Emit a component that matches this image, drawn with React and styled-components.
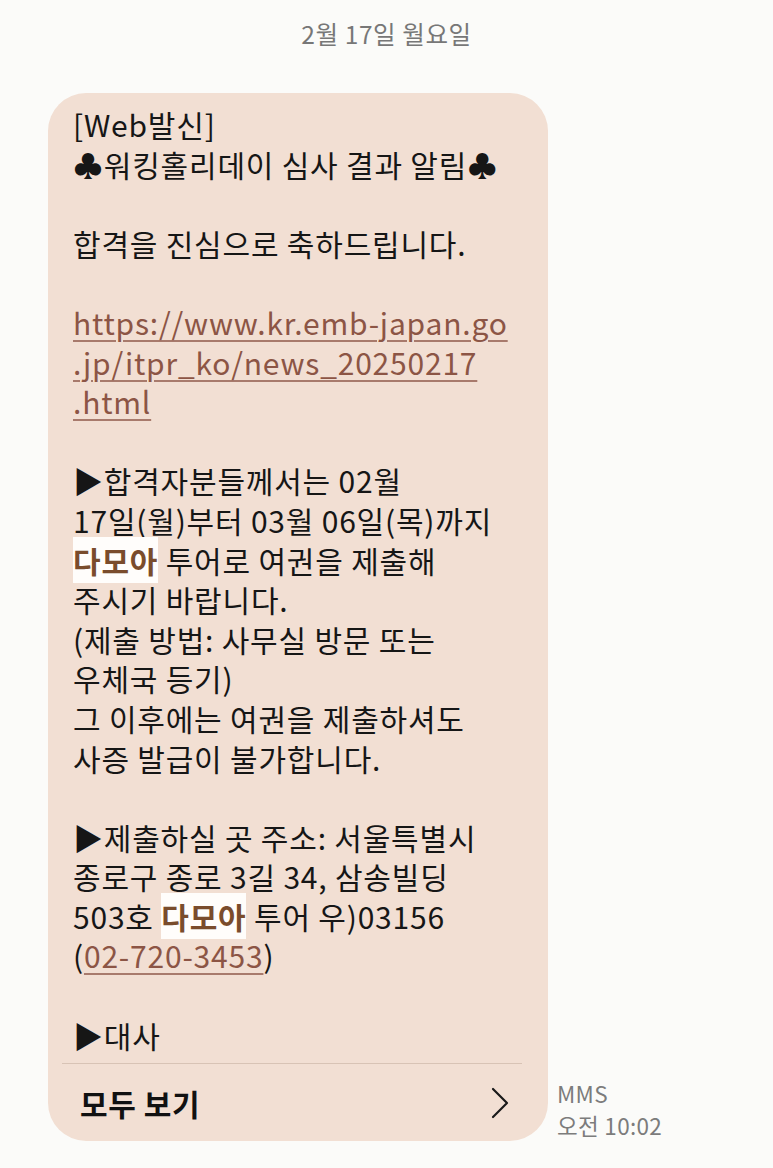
import React from "react";
import styled, { createGlobalStyle } from "styled-components";

const GlobalStyle = createGlobalStyle`
	html, body {
		margin: 0;
		padding: 0;
		background: #fbfbf9;
	}
	body {
		font-family: "Noto Sans CJK KR", "Noto Sans", sans-serif;
		-webkit-font-smoothing: antialiased;
	}
`;

const Page = styled.div`
	width: 773px;
	height: 1168px;
	overflow: hidden;
	background: #fbfbf9;
`;

const DateHeader = styled.div`
	text-align: center;
	color: #777;
	font-size: 24.5px;
	letter-spacing: 0.6px;
	line-height: 32px;
	padding: 18px 0 43px;
`;

const Row = styled.div`
	display: flex;
	align-items: flex-end;
	gap: 9px;
	padding-left: 48px;
`;

const Bubble = styled.div`
	width: 500px;
	background: #f2dfd3;
	border-radius: 38px;
	overflow: hidden;
`;

const Body = styled.div`
	padding: 12px 20px 8px 25px;
	color: #161616;
	font-size: 30px;
	letter-spacing: 0.8px;
	line-height: 39.6px;
	white-space: nowrap;
`;

const Line = styled.div`
	height: 39.6px;
`;

const Link = styled.span`
	color: #8c5545;
	text-decoration: underline;
	text-decoration-thickness: 1.5px;
	text-underline-offset: 5px;
	text-decoration-color: #a87a6c;
`;

const Mark = styled.span`
	background: #fffdfb;
	color: #7a4c2c;
	font-weight: 700;
	padding: 1px 0;
`;

const Divider = styled.div`
	height: 1px;
	background: #d8c3b5;
	margin: 0 26px 0 14px;
`;

const ViewAll = styled.div`
	display: flex;
	align-items: center;
	justify-content: space-between;
	padding: 0 38px 0 32px;
	height: 77px;
	font-size: 30px;
	letter-spacing: 0.6px;
	font-weight: 700;
	color: #111;
`;

const Meta = styled.div`
	color: #7c7c7c;
	font-size: 22.5px;
	letter-spacing: 0.3px;
	line-height: 32px;
	padding-bottom: 0;
`;

const Chevron = () => (
	<svg width="20" height="32" viewBox="0 0 20 32" fill="none">
		<path d="M3 2 L17 16 L3 30" stroke="#1a1a1a" strokeWidth="2.2" strokeLinecap="round" strokeLinejoin="round" />
	</svg>
);

export default function App() {
	return (
		<Page>
			<GlobalStyle />
			<DateHeader>2월 17일 월요일</DateHeader>
			<Row>
				<Bubble>
					<Body>
						<Line>[Web발신]</Line>
						<Line>♣워킹홀리데이 심사 결과 알림♣</Line>
						<Line />
						<Line>합격을 진심으로 축하드립니다.</Line>
						<Line />
						<Line><Link>https://www.kr.emb-japan.go</Link></Line>
						<Line><Link>.jp/itpr_ko/news_20250217</Link></Line>
						<Line><Link>.html</Link></Line>
						<Line />
						<Line>▶합격자분들께서는 02월</Line>
						<Line>17일(월)부터 03월 06일(목)까지</Line>
						<Line><Mark>다모아</Mark> 투어로 여권을 제출해</Line>
						<Line>주시기 바랍니다.</Line>
						<Line>(제출 방법: 사무실 방문 또는</Line>
						<Line>우체국 등기)</Line>
						<Line>그 이후에는 여권을 제출하셔도</Line>
						<Line>사증 발급이 불가합니다.</Line>
						<Line />
						<Line>▶제출하실 곳 주소: 서울특별시</Line>
						<Line>종로구 종로 3길 34, 삼송빌딩</Line>
						<Line>503호 <Mark>다모아</Mark> 투어 우)03156</Line>
						<Line>(<Link>02-720-3453</Link>)</Line>
						<Line />
						<Line>▶대사</Line>
					</Body>
					<Divider />
					<ViewAll>
						<span>모두 보기</span>
						<Chevron />
					</ViewAll>
				</Bubble>
				<Meta>
					<div>MMS</div>
					<div>오전 10:02</div>
				</Meta>
			</Row>
		</Page>
	);
}
